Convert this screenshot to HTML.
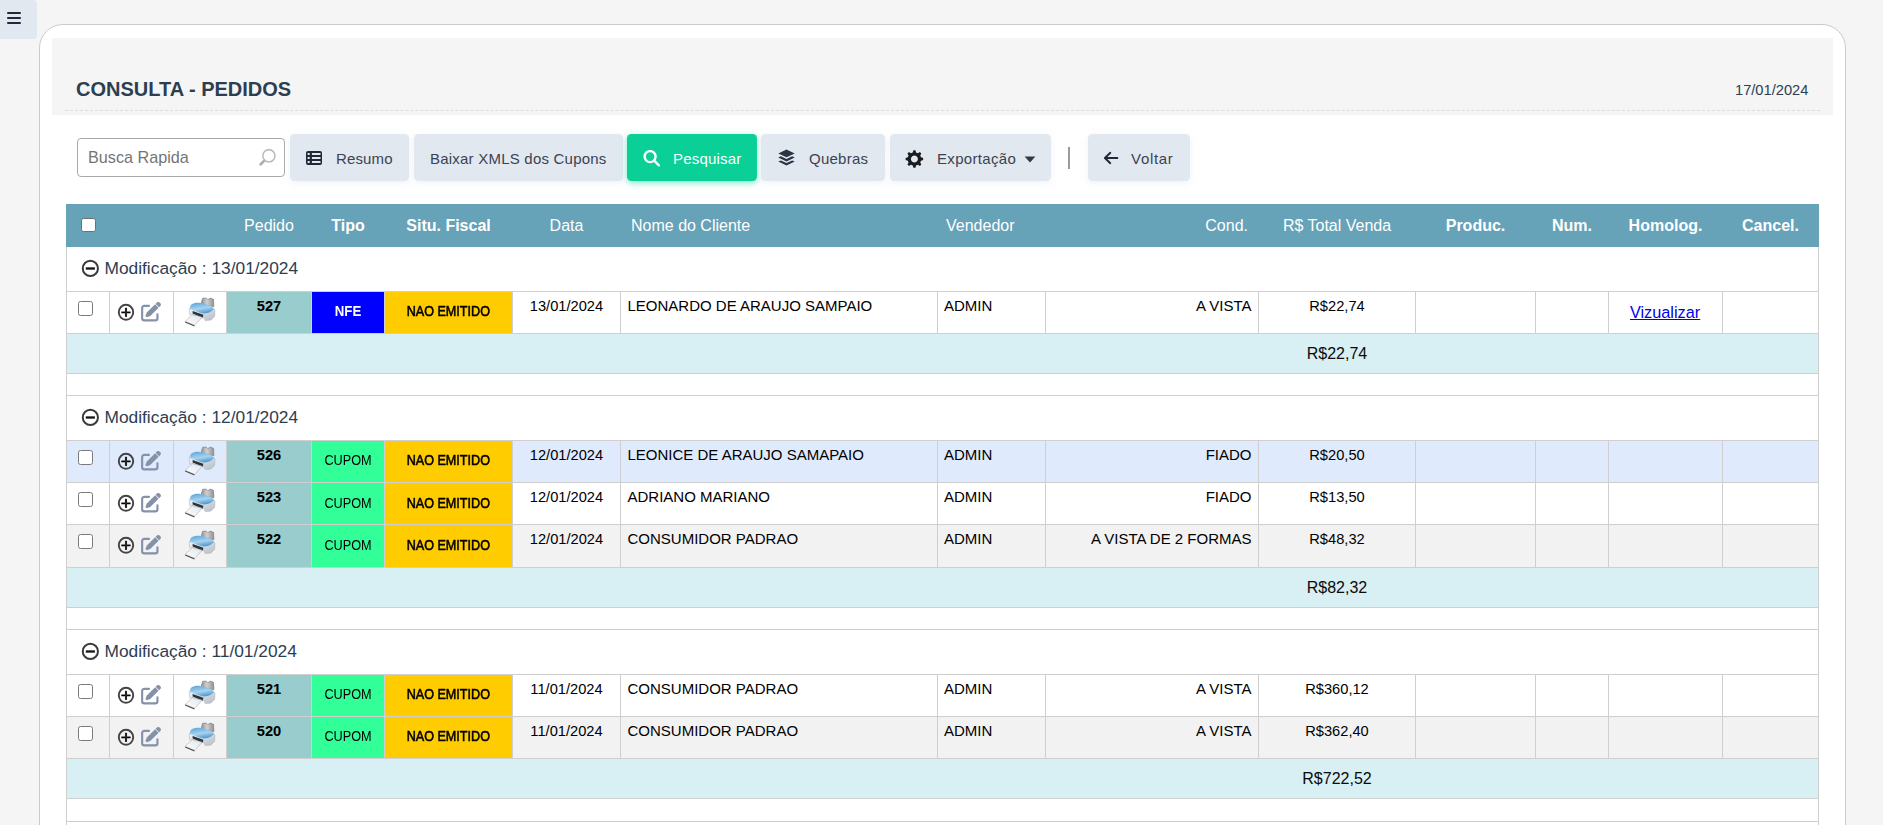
<!DOCTYPE html><html lang="pt-br"><head><meta charset="utf-8"><title>CONSULTA - PEDIDOS</title><style>
*{box-sizing:border-box}
html,body{margin:0;padding:0}
body{width:1883px;height:825px;overflow:hidden;position:relative;background:#f5f5f5;font-family:"Liberation Sans",Arial,sans-serif;color:#000}
.abs{position:absolute}
#menu{left:0;top:0;width:37px;height:39px;background:#e2e8f0;border-radius:0 4px 4px 0}
#menu i{position:absolute;left:7px;width:14px;height:2px;background:#1e293b;border-radius:1px}
#card{left:39px;top:24px;width:1807px;height:900px;background:#fff;border:1px solid #cbcbcb;border-radius:24px}
#hdr{left:52px;top:38px;width:1781px;height:77px;background:#f5f5f5}
#dash{left:65px;top:110px;width:1755px;height:0;border-top:1px dashed #dcdcdc}
#title{left:76px;top:77px;font-weight:bold;font-size:20px;line-height:24px;color:#2c3e50;white-space:nowrap}
#date{left:1735px;top:81px;font-size:14.67px;line-height:18px;color:#2c3e50;white-space:nowrap}
#search{left:77px;top:138px;width:208px;height:39px;border:1px solid #a9a9a9;border-radius:4px;background:#fff}
#search span{position:absolute;left:10px;top:9px;font-size:16.2px;line-height:19px;color:#757575;white-space:nowrap}
.btn{position:absolute;top:134px;height:47px;border-radius:4.5px;box-shadow:0 2px 6px 0 rgba(226,232,240,.55);background:#e2e8f0;color:#3a4352;font-size:15px;line-height:47px;white-space:nowrap}
.btn span{position:absolute;top:1px}
.btn svg{position:absolute}
#bpes{background:#0acf97;color:#fff;box-shadow:0 2px 6px 0 rgba(10,207,151,.5)}
#sep{left:1068px;top:147px;width:2px;height:22px;background:#9a9a9a}
#thead{left:66px;top:204px;width:1753px;height:43px;background:#66a2b8;color:#fff;font-size:16px;line-height:43px}
#thead span{position:absolute;top:0;white-space:nowrap}
#thead b{position:absolute;top:0;white-space:nowrap}
.cb{position:absolute;width:15px;height:15px;border:1.1px solid #7a7a7a;border-radius:2.6px;background:#fff}
.vl{position:absolute;width:1px;background:#cfcfcf}
.hl{position:absolute;left:66px;width:1753px;height:1px;background:#cfcfcf}
.row{position:absolute;left:67px;width:1751px}
.grp{position:absolute;left:104.5px;font-size:17.33px;line-height:22px;color:#2c3e50;white-space:nowrap}
.t{position:absolute;font-size:15px;line-height:18px;white-space:nowrap}
.c{text-align:center}
.r{text-align:right}
.bx{position:absolute;font-weight:bold;font-size:14px;text-align:center;white-space:nowrap}
.bx span{display:inline-block;transform-origin:50% 50%}
.n{font-size:14.67px}
.sub{position:absolute;font-size:16px;line-height:20px;text-align:center;white-space:nowrap;color:#0a0a0a}
a.lk{position:absolute;font-size:16.3px;line-height:20px;color:#0000ee;text-decoration:underline;text-align:center}
</style></head><body>
<div id="menu" class="abs"><i style="top:12px"></i><i style="top:17px"></i><i style="top:22px"></i></div>
<div id="card" class="abs"></div>
<div id="hdr" class="abs"></div><div id="dash" class="abs"></div>
<div id="title" class="abs">CONSULTA - PEDIDOS</div>
<div id="date" class="abs">17/01/2024</div>
<div id="search" class="abs"><span>Busca Rapida</span><svg style="position:absolute;left:180px;top:10px" width="20" height="20" viewBox="0 0 20 20"><circle cx="10.9" cy="6.8" r="6.1" fill="none" stroke="#b9b9b9" stroke-width="1.5"/><path d="M6.3 11.6 L1.9 16.2" stroke="#ababab" stroke-width="2.6" stroke-linecap="butt"/></svg></div>
<div class="btn" style="left:290px;width:119px"><svg style="left:16px;top:17px" width="16" height="14" viewBox="0 0 16 14"><path fill-rule="evenodd" fill="#1f2937" d="M2 0h12a2 2 0 0 1 2 2v10a2 2 0 0 1-2 2H2a2 2 0 0 1-2-2V2a2 2 0 0 1 2-2z M1.6 1.9v2h2.1v-2z M5.9 1.9v2h8.6v-2z M1.6 5.9v2h2.1v-2z M5.9 5.9v2h8.6v-2z M1.6 9.9v2h2.1v-2z M5.9 9.9v2h8.6v-2z"/></svg><span style="left:46px;letter-spacing:.15px">Resumo</span></div>
<div class="btn" style="left:414px;width:209px"><span style="left:16px;letter-spacing:.22px">Baixar XMLS dos Cupons</span></div>
<div class="btn" id="bpes" style="left:627px;width:130px"><svg style="left:16px;top:16px" width="17" height="17" viewBox="0 0 17 17"><circle cx="7.1" cy="6.6" r="5.5" fill="none" stroke="#fff" stroke-width="2.4"/><path d="M11.2 10.7 L15.9 15.3" stroke="#fff" stroke-width="2.4" stroke-linecap="round"/></svg><span style="left:46px;letter-spacing:.2px">Pesquisar</span></div>
<div class="btn" style="left:761px;width:124px"><svg style="left:17px;top:15px" width="17" height="17" viewBox="0 0 17 17"><path fill="#2b3544" d="M8.5 0.5L16.7 4.4L8.5 8.3L0.3 4.4Z M0.3 8.5L2.8 7.3L8.5 10L14.2 7.3L16.7 8.5L8.5 12.4Z M0.3 12.6L2.8 11.4L8.5 14.1L14.2 11.4L16.7 12.6L8.5 16.5Z"/></svg><span style="left:48px;letter-spacing:.25px">Quebras</span></div>
<div class="btn" style="left:890px;width:161px"><svg style="left:15px;top:16px;filter:blur(.4px)" width="19" height="18" viewBox="0 0 19 18"><path d="M7.76 2.40 L8.37 0.26 L10.43 0.26 L11.04 2.40 L12.91 3.17 L14.85 2.09 L16.31 3.55 L15.23 5.49 L16.00 7.36 L18.14 7.97 L18.14 10.03 L16.00 10.64 L15.23 12.51 L16.31 14.45 L14.85 15.91 L12.91 14.83 L11.04 15.60 L10.43 17.74 L8.37 17.74 L7.76 15.60 L5.89 14.83 L3.95 15.91 L2.49 14.45 L3.57 12.51 L2.80 10.64 L0.66 10.03 L0.66 7.97 L2.80 7.36 L3.57 5.49 L2.49 3.55 L3.95 2.09 L5.89 3.17Z M9.4 5.5 a3.5 3.5 0 1 0 0.001 0Z" fill="#1c1c1e" fill-rule="evenodd"/></svg><span style="left:47px;letter-spacing:.32px">Exportação</span><svg style="left:134px;top:22px" width="12" height="7" viewBox="0 0 12 7"><path d="M0.6 0.4h10.8L6 6.4Z" fill="#323a46"/></svg></div>
<div id="sep" class="abs"></div>
<div class="btn" style="left:1088px;width:102px"><svg style="left:15px;top:17px" width="16" height="14" viewBox="0 0 16 14"><path d="M14.4 7H2.4M7.3 1.8L1.9 7L7.3 12.2" fill="none" stroke="#1f2937" stroke-width="1.9" stroke-linecap="round" stroke-linejoin="round"/></svg><span style="left:43px;letter-spacing:.7px">Voltar</span></div>
<div id="thead" class="abs"><div class="cb" style="left:15.2px;top:13.8px;width:14.6px;height:14.6px;border-color:#707070"></div><span style="left:133.0px;width:140px;text-align:center">Pedido</span><b style="left:212.0px;width:140px;text-align:center">Tipo</b><b style="left:312.5px;width:140px;text-align:center">Situ. Fiscal</b><span style="left:430.5px;width:140px;text-align:center">Data</span><span style="left:565px">Nome do Cliente</span><span style="left:880px">Vendedor</span><span style="left:982px;width:200px;text-align:right">Cond.</span><span style="left:1201.0px;width:140px;text-align:center">R$ Total Venda</span><b style="left:1339.5px;width:140px;text-align:center">Produc.</b><b style="left:1436.0px;width:140px;text-align:center">Num.</b><b style="left:1529.5px;width:140px;text-align:center">Homolog.</b><b style="left:1634.5px;width:140px;text-align:center">Cancel.</b></div>
<div class="vl" style="left:66px;top:247px;height:600px"></div><div class="vl" style="left:1818px;top:247px;height:600px"></div>
<svg class="abs" style="left:81px;top:259px" width="19" height="19" viewBox="0 0 19 19"><circle cx="9.35" cy="9.4" r="7.6" fill="none" stroke="#3a3a3a" stroke-width="2"/><path d="M4.8 9.5h9.1" stroke="#111" stroke-width="2.3"/></svg>
<div class="grp" style="top:257px">Modificação : 13/01/2024</div>
<div class="hl" style="top:291px"></div>
<div class="abs" style="left:227px;top:292px;width:84px;height:41px;background:#99cccc"></div>
<div class="bx" style="left:312px;top:292px;width:72px;height:41px;line-height:39px;background:#0000ff;color:#fff;font-weight:bold"><span style="transform:scaleX(.945)">NFE</span></div>
<div class="bx" style="left:385px;top:292px;width:127px;height:41px;line-height:39px;background:#ffcc00;color:#000;font-weight:normal"><span style="transform:scaleX(.9);-webkit-text-stroke:.55px #000">NAO EMITIDO</span></div>
<div class="vl" style="left:109px;top:292px;height:41px"></div>
<div class="vl" style="left:173px;top:292px;height:41px"></div>
<div class="vl" style="left:226px;top:292px;height:41px"></div>
<div class="vl" style="left:311px;top:292px;height:41px"></div>
<div class="vl" style="left:384px;top:292px;height:41px"></div>
<div class="vl" style="left:512px;top:292px;height:41px"></div>
<div class="vl" style="left:620px;top:292px;height:41px"></div>
<div class="vl" style="left:937px;top:292px;height:41px"></div>
<div class="vl" style="left:1045px;top:292px;height:41px"></div>
<div class="vl" style="left:1258px;top:292px;height:41px"></div>
<div class="vl" style="left:1415px;top:292px;height:41px"></div>
<div class="vl" style="left:1535px;top:292px;height:41px"></div>
<div class="vl" style="left:1608px;top:292px;height:41px"></div>
<div class="vl" style="left:1722px;top:292px;height:41px"></div>
<div class="cb" style="left:78px;top:300.6px"></div>
<svg class="abs" style="left:117px;top:303px" width="18" height="19" viewBox="0 0 18 19"><ellipse cx="9" cy="9.3" rx="7.2" ry="7.5" fill="none" stroke="#444" stroke-width="1.9"/><path d="M4.3 9.4h9.3" stroke="#000" stroke-width="1.7"/><path d="M9 4.8v9.1" stroke="#222" stroke-width="2.1"/></svg>
<svg class="abs" style="left:141px;top:302px" width="20" height="20" viewBox="0 0 20 20"><path d="M8 3.85H3.3a2.15 2.15 0 0 0-2.15 2.15V16.2a2.15 2.15 0 0 0 2.15 2.15H14.3a2.15 2.15 0 0 0 2.15-2.15V12.2" fill="none" stroke="#8391a9" stroke-width="2.1" stroke-linecap="round"/><g transform="translate(5.1 14.6) rotate(-44.6)" fill="#8391a9"><path d="M0 1V-1L3.4-2.45H15.1V2.45H3.4Z"/><path d="M15.8-2.45H17.3A2.2 2.2 0 0 1 19.5-0.25V0.25A2.2 2.2 0 0 1 17.3 2.45H15.8Z"/></g></svg>
<svg class="abs" style="left:184px;top:296px;filter:blur(.3px)" width="32" height="32" viewBox="0 0 32 32"><defs><linearGradient id="pb1" x1="0.2" y1="0" x2="0.6" y2="1"><stop offset="0" stop-color="#5ea6dc"/><stop offset=".55" stop-color="#a6d3f0"/><stop offset="1" stop-color="#4b98d4"/></linearGradient><linearGradient id="pg1" x1="0" y1="0" x2="1" y2="0"><stop offset="0" stop-color="#8c8f92"/><stop offset=".45" stop-color="#cfd1d3"/><stop offset="1" stop-color="#8f9295"/></linearGradient><linearGradient id="pw1" x1="0" y1="0" x2="1" y2="1"><stop offset="0" stop-color="#f3f5f7"/><stop offset="1" stop-color="#b4bcc5"/></linearGradient><linearGradient id="pp1" x1="1" y1="0" x2="0" y2="1"><stop offset="0" stop-color="#dfe5ea"/><stop offset="1" stop-color="#ffffff"/></linearGradient></defs><path d="M17.1 7.8L18.6 2.3L22.2 2.1L23.9 3.8L26.1 2.1L29.5 3.3L29.9 10.5L26.1 10.3Z" fill="url(#pg1)" stroke="#7d8083" stroke-width=".7"/><path d="M5.2 12.5L5.7 18.8L8.6 18.8L19.8 21.6L21.2 24.6L27 24.1L30.7 20.2L30.9 14.4L29.9 12.5L19.3 17.3Z" fill="url(#pw1)" stroke="#a7afb7" stroke-width=".5"/><path d="M5.7 12C6 9.5 7.5 7.9 9.5 7.4C12.5 6.7 14.5 6.8 16.4 6.9C20 7.4 23 8.6 25.1 9.6C27.5 10.6 29.3 11.6 29.9 12.5C29.5 13.7 28.4 14.7 27 15.4C25.8 16.1 24.5 16.6 23.2 16.9C21.8 17.3 20.5 17.5 19.3 17.3C17.5 17 16 16.5 14.4 15.9C12 15 9.6 14 7.2 13C6.3 12.7 5.8 12.4 5.7 12Z" fill="url(#pb1)"/><path d="M8.6 14.9L19.3 18.8L18.8 21.7L8.6 17.6Z" fill="#2d333b"/><path d="M8.1 18.6L18.3 21.2L10.5 29.3L1.3 25.4Z" fill="url(#pp1)" stroke="#9aa1a8" stroke-width=".5"/><path d="M1.2 25.4L10.5 29.3L10.4 30.4L1 26.4Z" fill="#4a4e53"/></svg>
<div class="t c n" style="left:227px;top:297px;width:84px;font-weight:bold">527</div>
<div class="t c n" style="left:513px;top:297px;width:107px">13/01/2024</div>
<div class="t" style="left:627.5px;top:297px">LEONARDO DE ARAUJO SAMPAIO</div>
<div class="t" style="left:944px;top:297px">ADMIN</div>
<div class="t r" style="left:1046px;top:297px;width:205.5px">A VISTA</div>
<div class="t c n" style="left:1259px;top:297px;width:156px">R$22,74</div>
<a class="lk" style="left:1608.6px;top:302px;width:113px">Vizualizar</a>
<div class="hl" style="top:333px"></div>
<div class="row" style="top:334px;height:39px;background:#d8eff3"></div>
<div class="sub" style="left:1259px;top:344px;width:156px">R$22,74</div>
<div class="hl" style="top:373px"></div>
<div class="hl" style="top:395px"></div>
<svg class="abs" style="left:81px;top:408px" width="19" height="19" viewBox="0 0 19 19"><circle cx="9.35" cy="9.4" r="7.6" fill="none" stroke="#3a3a3a" stroke-width="2"/><path d="M4.8 9.5h9.1" stroke="#111" stroke-width="2.3"/></svg>
<div class="grp" style="top:406px">Modificação : 12/01/2024</div>
<div class="hl" style="top:440px"></div>
<div class="row" style="top:441px;height:41px;background:#dfebfc"></div>
<div class="abs" style="left:227px;top:441px;width:84px;height:41px;background:#99cccc"></div>
<div class="bx" style="left:312px;top:441px;width:72px;height:41px;line-height:39px;background:#33ff99;color:#000;font-weight:normal"><span style="transform:scaleX(.907)">CUPOM</span></div>
<div class="bx" style="left:385px;top:441px;width:127px;height:41px;line-height:39px;background:#ffcc00;color:#000;font-weight:normal"><span style="transform:scaleX(.9);-webkit-text-stroke:.55px #000">NAO EMITIDO</span></div>
<div class="vl" style="left:109px;top:441px;height:41px"></div>
<div class="vl" style="left:173px;top:441px;height:41px"></div>
<div class="vl" style="left:226px;top:441px;height:41px"></div>
<div class="vl" style="left:311px;top:441px;height:41px"></div>
<div class="vl" style="left:384px;top:441px;height:41px"></div>
<div class="vl" style="left:512px;top:441px;height:41px"></div>
<div class="vl" style="left:620px;top:441px;height:41px"></div>
<div class="vl" style="left:937px;top:441px;height:41px"></div>
<div class="vl" style="left:1045px;top:441px;height:41px"></div>
<div class="vl" style="left:1258px;top:441px;height:41px"></div>
<div class="vl" style="left:1415px;top:441px;height:41px"></div>
<div class="vl" style="left:1535px;top:441px;height:41px"></div>
<div class="vl" style="left:1608px;top:441px;height:41px"></div>
<div class="vl" style="left:1722px;top:441px;height:41px"></div>
<div class="cb" style="left:78px;top:449.6px"></div>
<svg class="abs" style="left:117px;top:452px" width="18" height="19" viewBox="0 0 18 19"><ellipse cx="9" cy="9.3" rx="7.2" ry="7.5" fill="none" stroke="#444" stroke-width="1.9"/><path d="M4.3 9.4h9.3" stroke="#000" stroke-width="1.7"/><path d="M9 4.8v9.1" stroke="#222" stroke-width="2.1"/></svg>
<svg class="abs" style="left:141px;top:451px" width="20" height="20" viewBox="0 0 20 20"><path d="M8 3.85H3.3a2.15 2.15 0 0 0-2.15 2.15V16.2a2.15 2.15 0 0 0 2.15 2.15H14.3a2.15 2.15 0 0 0 2.15-2.15V12.2" fill="none" stroke="#8391a9" stroke-width="2.1" stroke-linecap="round"/><g transform="translate(5.1 14.6) rotate(-44.6)" fill="#8391a9"><path d="M0 1V-1L3.4-2.45H15.1V2.45H3.4Z"/><path d="M15.8-2.45H17.3A2.2 2.2 0 0 1 19.5-0.25V0.25A2.2 2.2 0 0 1 17.3 2.45H15.8Z"/></g></svg>
<svg class="abs" style="left:184px;top:445px;filter:blur(.3px)" width="32" height="32" viewBox="0 0 32 32"><defs><linearGradient id="pb2" x1="0.2" y1="0" x2="0.6" y2="1"><stop offset="0" stop-color="#5ea6dc"/><stop offset=".55" stop-color="#a6d3f0"/><stop offset="1" stop-color="#4b98d4"/></linearGradient><linearGradient id="pg2" x1="0" y1="0" x2="1" y2="0"><stop offset="0" stop-color="#8c8f92"/><stop offset=".45" stop-color="#cfd1d3"/><stop offset="1" stop-color="#8f9295"/></linearGradient><linearGradient id="pw2" x1="0" y1="0" x2="1" y2="1"><stop offset="0" stop-color="#f3f5f7"/><stop offset="1" stop-color="#b4bcc5"/></linearGradient><linearGradient id="pp2" x1="1" y1="0" x2="0" y2="1"><stop offset="0" stop-color="#dfe5ea"/><stop offset="1" stop-color="#ffffff"/></linearGradient></defs><path d="M17.1 7.8L18.6 2.3L22.2 2.1L23.9 3.8L26.1 2.1L29.5 3.3L29.9 10.5L26.1 10.3Z" fill="url(#pg2)" stroke="#7d8083" stroke-width=".7"/><path d="M5.2 12.5L5.7 18.8L8.6 18.8L19.8 21.6L21.2 24.6L27 24.1L30.7 20.2L30.9 14.4L29.9 12.5L19.3 17.3Z" fill="url(#pw2)" stroke="#a7afb7" stroke-width=".5"/><path d="M5.7 12C6 9.5 7.5 7.9 9.5 7.4C12.5 6.7 14.5 6.8 16.4 6.9C20 7.4 23 8.6 25.1 9.6C27.5 10.6 29.3 11.6 29.9 12.5C29.5 13.7 28.4 14.7 27 15.4C25.8 16.1 24.5 16.6 23.2 16.9C21.8 17.3 20.5 17.5 19.3 17.3C17.5 17 16 16.5 14.4 15.9C12 15 9.6 14 7.2 13C6.3 12.7 5.8 12.4 5.7 12Z" fill="url(#pb2)"/><path d="M8.6 14.9L19.3 18.8L18.8 21.7L8.6 17.6Z" fill="#2d333b"/><path d="M8.1 18.6L18.3 21.2L10.5 29.3L1.3 25.4Z" fill="url(#pp2)" stroke="#9aa1a8" stroke-width=".5"/><path d="M1.2 25.4L10.5 29.3L10.4 30.4L1 26.4Z" fill="#4a4e53"/></svg>
<div class="t c n" style="left:227px;top:446px;width:84px;font-weight:bold">526</div>
<div class="t c n" style="left:513px;top:446px;width:107px">12/01/2024</div>
<div class="t" style="left:627.5px;top:446px">LEONICE DE ARAUJO SAMAPAIO</div>
<div class="t" style="left:944px;top:446px">ADMIN</div>
<div class="t r" style="left:1046px;top:446px;width:205.5px">FIADO</div>
<div class="t c n" style="left:1259px;top:446px;width:156px">R$20,50</div>
<div class="hl" style="top:482px"></div>
<div class="abs" style="left:227px;top:483px;width:84px;height:41px;background:#99cccc"></div>
<div class="bx" style="left:312px;top:483px;width:72px;height:41px;line-height:41px;background:#33ff99;color:#000;font-weight:normal"><span style="transform:scaleX(.907)">CUPOM</span></div>
<div class="bx" style="left:385px;top:483px;width:127px;height:41px;line-height:41px;background:#ffcc00;color:#000;font-weight:normal"><span style="transform:scaleX(.9);-webkit-text-stroke:.55px #000">NAO EMITIDO</span></div>
<div class="vl" style="left:109px;top:483px;height:41px"></div>
<div class="vl" style="left:173px;top:483px;height:41px"></div>
<div class="vl" style="left:226px;top:483px;height:41px"></div>
<div class="vl" style="left:311px;top:483px;height:41px"></div>
<div class="vl" style="left:384px;top:483px;height:41px"></div>
<div class="vl" style="left:512px;top:483px;height:41px"></div>
<div class="vl" style="left:620px;top:483px;height:41px"></div>
<div class="vl" style="left:937px;top:483px;height:41px"></div>
<div class="vl" style="left:1045px;top:483px;height:41px"></div>
<div class="vl" style="left:1258px;top:483px;height:41px"></div>
<div class="vl" style="left:1415px;top:483px;height:41px"></div>
<div class="vl" style="left:1535px;top:483px;height:41px"></div>
<div class="vl" style="left:1608px;top:483px;height:41px"></div>
<div class="vl" style="left:1722px;top:483px;height:41px"></div>
<div class="cb" style="left:78px;top:491.6px"></div>
<svg class="abs" style="left:117px;top:494px" width="18" height="19" viewBox="0 0 18 19"><ellipse cx="9" cy="9.3" rx="7.2" ry="7.5" fill="none" stroke="#444" stroke-width="1.9"/><path d="M4.3 9.4h9.3" stroke="#000" stroke-width="1.7"/><path d="M9 4.8v9.1" stroke="#222" stroke-width="2.1"/></svg>
<svg class="abs" style="left:141px;top:493px" width="20" height="20" viewBox="0 0 20 20"><path d="M8 3.85H3.3a2.15 2.15 0 0 0-2.15 2.15V16.2a2.15 2.15 0 0 0 2.15 2.15H14.3a2.15 2.15 0 0 0 2.15-2.15V12.2" fill="none" stroke="#8391a9" stroke-width="2.1" stroke-linecap="round"/><g transform="translate(5.1 14.6) rotate(-44.6)" fill="#8391a9"><path d="M0 1V-1L3.4-2.45H15.1V2.45H3.4Z"/><path d="M15.8-2.45H17.3A2.2 2.2 0 0 1 19.5-0.25V0.25A2.2 2.2 0 0 1 17.3 2.45H15.8Z"/></g></svg>
<svg class="abs" style="left:184px;top:487px;filter:blur(.3px)" width="32" height="32" viewBox="0 0 32 32"><defs><linearGradient id="pb3" x1="0.2" y1="0" x2="0.6" y2="1"><stop offset="0" stop-color="#5ea6dc"/><stop offset=".55" stop-color="#a6d3f0"/><stop offset="1" stop-color="#4b98d4"/></linearGradient><linearGradient id="pg3" x1="0" y1="0" x2="1" y2="0"><stop offset="0" stop-color="#8c8f92"/><stop offset=".45" stop-color="#cfd1d3"/><stop offset="1" stop-color="#8f9295"/></linearGradient><linearGradient id="pw3" x1="0" y1="0" x2="1" y2="1"><stop offset="0" stop-color="#f3f5f7"/><stop offset="1" stop-color="#b4bcc5"/></linearGradient><linearGradient id="pp3" x1="1" y1="0" x2="0" y2="1"><stop offset="0" stop-color="#dfe5ea"/><stop offset="1" stop-color="#ffffff"/></linearGradient></defs><path d="M17.1 7.8L18.6 2.3L22.2 2.1L23.9 3.8L26.1 2.1L29.5 3.3L29.9 10.5L26.1 10.3Z" fill="url(#pg3)" stroke="#7d8083" stroke-width=".7"/><path d="M5.2 12.5L5.7 18.8L8.6 18.8L19.8 21.6L21.2 24.6L27 24.1L30.7 20.2L30.9 14.4L29.9 12.5L19.3 17.3Z" fill="url(#pw3)" stroke="#a7afb7" stroke-width=".5"/><path d="M5.7 12C6 9.5 7.5 7.9 9.5 7.4C12.5 6.7 14.5 6.8 16.4 6.9C20 7.4 23 8.6 25.1 9.6C27.5 10.6 29.3 11.6 29.9 12.5C29.5 13.7 28.4 14.7 27 15.4C25.8 16.1 24.5 16.6 23.2 16.9C21.8 17.3 20.5 17.5 19.3 17.3C17.5 17 16 16.5 14.4 15.9C12 15 9.6 14 7.2 13C6.3 12.7 5.8 12.4 5.7 12Z" fill="url(#pb3)"/><path d="M8.6 14.9L19.3 18.8L18.8 21.7L8.6 17.6Z" fill="#2d333b"/><path d="M8.1 18.6L18.3 21.2L10.5 29.3L1.3 25.4Z" fill="url(#pp3)" stroke="#9aa1a8" stroke-width=".5"/><path d="M1.2 25.4L10.5 29.3L10.4 30.4L1 26.4Z" fill="#4a4e53"/></svg>
<div class="t c n" style="left:227px;top:488px;width:84px;font-weight:bold">523</div>
<div class="t c n" style="left:513px;top:488px;width:107px">12/01/2024</div>
<div class="t" style="left:627.5px;top:488px">ADRIANO MARIANO</div>
<div class="t" style="left:944px;top:488px">ADMIN</div>
<div class="t r" style="left:1046px;top:488px;width:205.5px">FIADO</div>
<div class="t c n" style="left:1259px;top:488px;width:156px">R$13,50</div>
<div class="hl" style="top:524px"></div>
<div class="row" style="top:525px;height:42px;background:#f2f2f2"></div>
<div class="abs" style="left:227px;top:525px;width:84px;height:42px;background:#99cccc"></div>
<div class="bx" style="left:312px;top:525px;width:72px;height:42px;line-height:40px;background:#33ff99;color:#000;font-weight:normal"><span style="transform:scaleX(.907)">CUPOM</span></div>
<div class="bx" style="left:385px;top:525px;width:127px;height:42px;line-height:40px;background:#ffcc00;color:#000;font-weight:normal"><span style="transform:scaleX(.9);-webkit-text-stroke:.55px #000">NAO EMITIDO</span></div>
<div class="vl" style="left:109px;top:525px;height:42px"></div>
<div class="vl" style="left:173px;top:525px;height:42px"></div>
<div class="vl" style="left:226px;top:525px;height:42px"></div>
<div class="vl" style="left:311px;top:525px;height:42px"></div>
<div class="vl" style="left:384px;top:525px;height:42px"></div>
<div class="vl" style="left:512px;top:525px;height:42px"></div>
<div class="vl" style="left:620px;top:525px;height:42px"></div>
<div class="vl" style="left:937px;top:525px;height:42px"></div>
<div class="vl" style="left:1045px;top:525px;height:42px"></div>
<div class="vl" style="left:1258px;top:525px;height:42px"></div>
<div class="vl" style="left:1415px;top:525px;height:42px"></div>
<div class="vl" style="left:1535px;top:525px;height:42px"></div>
<div class="vl" style="left:1608px;top:525px;height:42px"></div>
<div class="vl" style="left:1722px;top:525px;height:42px"></div>
<div class="cb" style="left:78px;top:533.6px"></div>
<svg class="abs" style="left:117px;top:536px" width="18" height="19" viewBox="0 0 18 19"><ellipse cx="9" cy="9.3" rx="7.2" ry="7.5" fill="none" stroke="#444" stroke-width="1.9"/><path d="M4.3 9.4h9.3" stroke="#000" stroke-width="1.7"/><path d="M9 4.8v9.1" stroke="#222" stroke-width="2.1"/></svg>
<svg class="abs" style="left:141px;top:535px" width="20" height="20" viewBox="0 0 20 20"><path d="M8 3.85H3.3a2.15 2.15 0 0 0-2.15 2.15V16.2a2.15 2.15 0 0 0 2.15 2.15H14.3a2.15 2.15 0 0 0 2.15-2.15V12.2" fill="none" stroke="#8391a9" stroke-width="2.1" stroke-linecap="round"/><g transform="translate(5.1 14.6) rotate(-44.6)" fill="#8391a9"><path d="M0 1V-1L3.4-2.45H15.1V2.45H3.4Z"/><path d="M15.8-2.45H17.3A2.2 2.2 0 0 1 19.5-0.25V0.25A2.2 2.2 0 0 1 17.3 2.45H15.8Z"/></g></svg>
<svg class="abs" style="left:184px;top:529px;filter:blur(.3px)" width="32" height="32" viewBox="0 0 32 32"><defs><linearGradient id="pb4" x1="0.2" y1="0" x2="0.6" y2="1"><stop offset="0" stop-color="#5ea6dc"/><stop offset=".55" stop-color="#a6d3f0"/><stop offset="1" stop-color="#4b98d4"/></linearGradient><linearGradient id="pg4" x1="0" y1="0" x2="1" y2="0"><stop offset="0" stop-color="#8c8f92"/><stop offset=".45" stop-color="#cfd1d3"/><stop offset="1" stop-color="#8f9295"/></linearGradient><linearGradient id="pw4" x1="0" y1="0" x2="1" y2="1"><stop offset="0" stop-color="#f3f5f7"/><stop offset="1" stop-color="#b4bcc5"/></linearGradient><linearGradient id="pp4" x1="1" y1="0" x2="0" y2="1"><stop offset="0" stop-color="#dfe5ea"/><stop offset="1" stop-color="#ffffff"/></linearGradient></defs><path d="M17.1 7.8L18.6 2.3L22.2 2.1L23.9 3.8L26.1 2.1L29.5 3.3L29.9 10.5L26.1 10.3Z" fill="url(#pg4)" stroke="#7d8083" stroke-width=".7"/><path d="M5.2 12.5L5.7 18.8L8.6 18.8L19.8 21.6L21.2 24.6L27 24.1L30.7 20.2L30.9 14.4L29.9 12.5L19.3 17.3Z" fill="url(#pw4)" stroke="#a7afb7" stroke-width=".5"/><path d="M5.7 12C6 9.5 7.5 7.9 9.5 7.4C12.5 6.7 14.5 6.8 16.4 6.9C20 7.4 23 8.6 25.1 9.6C27.5 10.6 29.3 11.6 29.9 12.5C29.5 13.7 28.4 14.7 27 15.4C25.8 16.1 24.5 16.6 23.2 16.9C21.8 17.3 20.5 17.5 19.3 17.3C17.5 17 16 16.5 14.4 15.9C12 15 9.6 14 7.2 13C6.3 12.7 5.8 12.4 5.7 12Z" fill="url(#pb4)"/><path d="M8.6 14.9L19.3 18.8L18.8 21.7L8.6 17.6Z" fill="#2d333b"/><path d="M8.1 18.6L18.3 21.2L10.5 29.3L1.3 25.4Z" fill="url(#pp4)" stroke="#9aa1a8" stroke-width=".5"/><path d="M1.2 25.4L10.5 29.3L10.4 30.4L1 26.4Z" fill="#4a4e53"/></svg>
<div class="t c n" style="left:227px;top:530px;width:84px;font-weight:bold">522</div>
<div class="t c n" style="left:513px;top:530px;width:107px">12/01/2024</div>
<div class="t" style="left:627.5px;top:530px">CONSUMIDOR PADRAO</div>
<div class="t" style="left:944px;top:530px">ADMIN</div>
<div class="t r" style="left:1046px;top:530px;width:205.5px">A VISTA DE 2 FORMAS</div>
<div class="t c n" style="left:1259px;top:530px;width:156px">R$48,32</div>
<div class="hl" style="top:567px"></div>
<div class="row" style="top:568px;height:39px;background:#d8eff3"></div>
<div class="sub" style="left:1259px;top:578px;width:156px">R$82,32</div>
<div class="hl" style="top:607px"></div>
<div class="hl" style="top:629px"></div>
<svg class="abs" style="left:81px;top:642px" width="19" height="19" viewBox="0 0 19 19"><circle cx="9.35" cy="9.4" r="7.6" fill="none" stroke="#3a3a3a" stroke-width="2"/><path d="M4.8 9.5h9.1" stroke="#111" stroke-width="2.3"/></svg>
<div class="grp" style="top:640px">Modificação : 11/01/2024</div>
<div class="hl" style="top:674px"></div>
<div class="abs" style="left:227px;top:675px;width:84px;height:41px;background:#99cccc"></div>
<div class="bx" style="left:312px;top:675px;width:72px;height:41px;line-height:39px;background:#33ff99;color:#000;font-weight:normal"><span style="transform:scaleX(.907)">CUPOM</span></div>
<div class="bx" style="left:385px;top:675px;width:127px;height:41px;line-height:39px;background:#ffcc00;color:#000;font-weight:normal"><span style="transform:scaleX(.9);-webkit-text-stroke:.55px #000">NAO EMITIDO</span></div>
<div class="vl" style="left:109px;top:675px;height:41px"></div>
<div class="vl" style="left:173px;top:675px;height:41px"></div>
<div class="vl" style="left:226px;top:675px;height:41px"></div>
<div class="vl" style="left:311px;top:675px;height:41px"></div>
<div class="vl" style="left:384px;top:675px;height:41px"></div>
<div class="vl" style="left:512px;top:675px;height:41px"></div>
<div class="vl" style="left:620px;top:675px;height:41px"></div>
<div class="vl" style="left:937px;top:675px;height:41px"></div>
<div class="vl" style="left:1045px;top:675px;height:41px"></div>
<div class="vl" style="left:1258px;top:675px;height:41px"></div>
<div class="vl" style="left:1415px;top:675px;height:41px"></div>
<div class="vl" style="left:1535px;top:675px;height:41px"></div>
<div class="vl" style="left:1608px;top:675px;height:41px"></div>
<div class="vl" style="left:1722px;top:675px;height:41px"></div>
<div class="cb" style="left:78px;top:683.6px"></div>
<svg class="abs" style="left:117px;top:686px" width="18" height="19" viewBox="0 0 18 19"><ellipse cx="9" cy="9.3" rx="7.2" ry="7.5" fill="none" stroke="#444" stroke-width="1.9"/><path d="M4.3 9.4h9.3" stroke="#000" stroke-width="1.7"/><path d="M9 4.8v9.1" stroke="#222" stroke-width="2.1"/></svg>
<svg class="abs" style="left:141px;top:685px" width="20" height="20" viewBox="0 0 20 20"><path d="M8 3.85H3.3a2.15 2.15 0 0 0-2.15 2.15V16.2a2.15 2.15 0 0 0 2.15 2.15H14.3a2.15 2.15 0 0 0 2.15-2.15V12.2" fill="none" stroke="#8391a9" stroke-width="2.1" stroke-linecap="round"/><g transform="translate(5.1 14.6) rotate(-44.6)" fill="#8391a9"><path d="M0 1V-1L3.4-2.45H15.1V2.45H3.4Z"/><path d="M15.8-2.45H17.3A2.2 2.2 0 0 1 19.5-0.25V0.25A2.2 2.2 0 0 1 17.3 2.45H15.8Z"/></g></svg>
<svg class="abs" style="left:184px;top:679px;filter:blur(.3px)" width="32" height="32" viewBox="0 0 32 32"><defs><linearGradient id="pb5" x1="0.2" y1="0" x2="0.6" y2="1"><stop offset="0" stop-color="#5ea6dc"/><stop offset=".55" stop-color="#a6d3f0"/><stop offset="1" stop-color="#4b98d4"/></linearGradient><linearGradient id="pg5" x1="0" y1="0" x2="1" y2="0"><stop offset="0" stop-color="#8c8f92"/><stop offset=".45" stop-color="#cfd1d3"/><stop offset="1" stop-color="#8f9295"/></linearGradient><linearGradient id="pw5" x1="0" y1="0" x2="1" y2="1"><stop offset="0" stop-color="#f3f5f7"/><stop offset="1" stop-color="#b4bcc5"/></linearGradient><linearGradient id="pp5" x1="1" y1="0" x2="0" y2="1"><stop offset="0" stop-color="#dfe5ea"/><stop offset="1" stop-color="#ffffff"/></linearGradient></defs><path d="M17.1 7.8L18.6 2.3L22.2 2.1L23.9 3.8L26.1 2.1L29.5 3.3L29.9 10.5L26.1 10.3Z" fill="url(#pg5)" stroke="#7d8083" stroke-width=".7"/><path d="M5.2 12.5L5.7 18.8L8.6 18.8L19.8 21.6L21.2 24.6L27 24.1L30.7 20.2L30.9 14.4L29.9 12.5L19.3 17.3Z" fill="url(#pw5)" stroke="#a7afb7" stroke-width=".5"/><path d="M5.7 12C6 9.5 7.5 7.9 9.5 7.4C12.5 6.7 14.5 6.8 16.4 6.9C20 7.4 23 8.6 25.1 9.6C27.5 10.6 29.3 11.6 29.9 12.5C29.5 13.7 28.4 14.7 27 15.4C25.8 16.1 24.5 16.6 23.2 16.9C21.8 17.3 20.5 17.5 19.3 17.3C17.5 17 16 16.5 14.4 15.9C12 15 9.6 14 7.2 13C6.3 12.7 5.8 12.4 5.7 12Z" fill="url(#pb5)"/><path d="M8.6 14.9L19.3 18.8L18.8 21.7L8.6 17.6Z" fill="#2d333b"/><path d="M8.1 18.6L18.3 21.2L10.5 29.3L1.3 25.4Z" fill="url(#pp5)" stroke="#9aa1a8" stroke-width=".5"/><path d="M1.2 25.4L10.5 29.3L10.4 30.4L1 26.4Z" fill="#4a4e53"/></svg>
<div class="t c n" style="left:227px;top:680px;width:84px;font-weight:bold">521</div>
<div class="t c n" style="left:513px;top:680px;width:107px">11/01/2024</div>
<div class="t" style="left:627.5px;top:680px">CONSUMIDOR PADRAO</div>
<div class="t" style="left:944px;top:680px">ADMIN</div>
<div class="t r" style="left:1046px;top:680px;width:205.5px">A VISTA</div>
<div class="t c n" style="left:1259px;top:680px;width:156px">R$360,12</div>
<div class="hl" style="top:716px"></div>
<div class="row" style="top:717px;height:41px;background:#f2f2f2"></div>
<div class="abs" style="left:227px;top:717px;width:84px;height:41px;background:#99cccc"></div>
<div class="bx" style="left:312px;top:717px;width:72px;height:41px;line-height:39px;background:#33ff99;color:#000;font-weight:normal"><span style="transform:scaleX(.907)">CUPOM</span></div>
<div class="bx" style="left:385px;top:717px;width:127px;height:41px;line-height:39px;background:#ffcc00;color:#000;font-weight:normal"><span style="transform:scaleX(.9);-webkit-text-stroke:.55px #000">NAO EMITIDO</span></div>
<div class="vl" style="left:109px;top:717px;height:41px"></div>
<div class="vl" style="left:173px;top:717px;height:41px"></div>
<div class="vl" style="left:226px;top:717px;height:41px"></div>
<div class="vl" style="left:311px;top:717px;height:41px"></div>
<div class="vl" style="left:384px;top:717px;height:41px"></div>
<div class="vl" style="left:512px;top:717px;height:41px"></div>
<div class="vl" style="left:620px;top:717px;height:41px"></div>
<div class="vl" style="left:937px;top:717px;height:41px"></div>
<div class="vl" style="left:1045px;top:717px;height:41px"></div>
<div class="vl" style="left:1258px;top:717px;height:41px"></div>
<div class="vl" style="left:1415px;top:717px;height:41px"></div>
<div class="vl" style="left:1535px;top:717px;height:41px"></div>
<div class="vl" style="left:1608px;top:717px;height:41px"></div>
<div class="vl" style="left:1722px;top:717px;height:41px"></div>
<div class="cb" style="left:78px;top:725.6px"></div>
<svg class="abs" style="left:117px;top:728px" width="18" height="19" viewBox="0 0 18 19"><ellipse cx="9" cy="9.3" rx="7.2" ry="7.5" fill="none" stroke="#444" stroke-width="1.9"/><path d="M4.3 9.4h9.3" stroke="#000" stroke-width="1.7"/><path d="M9 4.8v9.1" stroke="#222" stroke-width="2.1"/></svg>
<svg class="abs" style="left:141px;top:727px" width="20" height="20" viewBox="0 0 20 20"><path d="M8 3.85H3.3a2.15 2.15 0 0 0-2.15 2.15V16.2a2.15 2.15 0 0 0 2.15 2.15H14.3a2.15 2.15 0 0 0 2.15-2.15V12.2" fill="none" stroke="#8391a9" stroke-width="2.1" stroke-linecap="round"/><g transform="translate(5.1 14.6) rotate(-44.6)" fill="#8391a9"><path d="M0 1V-1L3.4-2.45H15.1V2.45H3.4Z"/><path d="M15.8-2.45H17.3A2.2 2.2 0 0 1 19.5-0.25V0.25A2.2 2.2 0 0 1 17.3 2.45H15.8Z"/></g></svg>
<svg class="abs" style="left:184px;top:721px;filter:blur(.3px)" width="32" height="32" viewBox="0 0 32 32"><defs><linearGradient id="pb6" x1="0.2" y1="0" x2="0.6" y2="1"><stop offset="0" stop-color="#5ea6dc"/><stop offset=".55" stop-color="#a6d3f0"/><stop offset="1" stop-color="#4b98d4"/></linearGradient><linearGradient id="pg6" x1="0" y1="0" x2="1" y2="0"><stop offset="0" stop-color="#8c8f92"/><stop offset=".45" stop-color="#cfd1d3"/><stop offset="1" stop-color="#8f9295"/></linearGradient><linearGradient id="pw6" x1="0" y1="0" x2="1" y2="1"><stop offset="0" stop-color="#f3f5f7"/><stop offset="1" stop-color="#b4bcc5"/></linearGradient><linearGradient id="pp6" x1="1" y1="0" x2="0" y2="1"><stop offset="0" stop-color="#dfe5ea"/><stop offset="1" stop-color="#ffffff"/></linearGradient></defs><path d="M17.1 7.8L18.6 2.3L22.2 2.1L23.9 3.8L26.1 2.1L29.5 3.3L29.9 10.5L26.1 10.3Z" fill="url(#pg6)" stroke="#7d8083" stroke-width=".7"/><path d="M5.2 12.5L5.7 18.8L8.6 18.8L19.8 21.6L21.2 24.6L27 24.1L30.7 20.2L30.9 14.4L29.9 12.5L19.3 17.3Z" fill="url(#pw6)" stroke="#a7afb7" stroke-width=".5"/><path d="M5.7 12C6 9.5 7.5 7.9 9.5 7.4C12.5 6.7 14.5 6.8 16.4 6.9C20 7.4 23 8.6 25.1 9.6C27.5 10.6 29.3 11.6 29.9 12.5C29.5 13.7 28.4 14.7 27 15.4C25.8 16.1 24.5 16.6 23.2 16.9C21.8 17.3 20.5 17.5 19.3 17.3C17.5 17 16 16.5 14.4 15.9C12 15 9.6 14 7.2 13C6.3 12.7 5.8 12.4 5.7 12Z" fill="url(#pb6)"/><path d="M8.6 14.9L19.3 18.8L18.8 21.7L8.6 17.6Z" fill="#2d333b"/><path d="M8.1 18.6L18.3 21.2L10.5 29.3L1.3 25.4Z" fill="url(#pp6)" stroke="#9aa1a8" stroke-width=".5"/><path d="M1.2 25.4L10.5 29.3L10.4 30.4L1 26.4Z" fill="#4a4e53"/></svg>
<div class="t c n" style="left:227px;top:722px;width:84px;font-weight:bold">520</div>
<div class="t c n" style="left:513px;top:722px;width:107px">11/01/2024</div>
<div class="t" style="left:627.5px;top:722px">CONSUMIDOR PADRAO</div>
<div class="t" style="left:944px;top:722px">ADMIN</div>
<div class="t r" style="left:1046px;top:722px;width:205.5px">A VISTA</div>
<div class="t c n" style="left:1259px;top:722px;width:156px">R$362,40</div>
<div class="hl" style="top:758px"></div>
<div class="row" style="top:759px;height:39px;background:#d8eff3"></div>
<div class="sub" style="left:1259px;top:769px;width:156px">R$722,52</div>
<div class="hl" style="top:798px"></div>
<div class="hl" style="top:821px"></div>
</body></html>
